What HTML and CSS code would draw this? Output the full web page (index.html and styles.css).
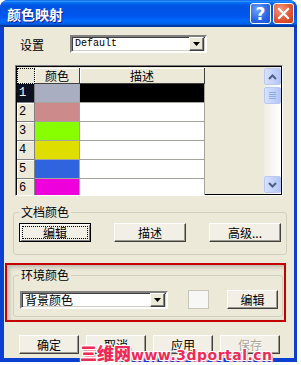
FILE: index.html
```html
<!DOCTYPE html>
<html lang="zh-CN">
<head>
  <meta charset="UTF-8" />
  <title>颜色映射</title>
  <link rel="stylesheet" href="styles.css">
</head>
<body>
  <div class="window">
    <div class="titlebar">
      <span class="title">颜色映射</span>
      <span class="tb-btn help">?</span>
      <span class="tb-btn close">
        <svg width="13" height="13" viewBox="0 0 13 13"><path d="M2 2 L11 11 M11 2 L2 11" stroke="#fff" stroke-width="2.2" stroke-linecap="square"/></svg>
      </span>
    </div>

    <div class="client">
      <div class="setting-row">
        <span class="lbl">设置</span>
        <div class="combo combo-default">
          <span class="combo-text mono">Default</span>
          <span class="combo-arrow"><svg width="7" height="4" viewBox="0 0 7 4"><path d="M0 0 H7 L3.5 4 Z" fill="#000"/></svg></span>
        </div>
      </div>

      <div class="list-frame">
        <div class="grid">
          <div class="hd corner"></div>
          <div class="hd">颜色</div>
          <div class="hd">描述</div>

          <div class="rn sel">1</div><div class="sw" style="background:#a9aec0"></div><div class="desc sel"></div>
          <div class="rn">2</div><div class="sw" style="background:#cc8a8a"></div><div class="desc"></div>
          <div class="rn">3</div><div class="sw" style="background:#88ff00"></div><div class="desc"></div>
          <div class="rn">4</div><div class="sw" style="background:#dede00"></div><div class="desc"></div>
          <div class="rn">5</div><div class="sw" style="background:#2f64de"></div><div class="desc"></div>
          <div class="rn">6</div><div class="sw" style="background:#ee00dd"></div><div class="desc"></div>
        </div>
        <div class="vscroll">
          <div class="sb-btn"><svg width="9" height="6" viewBox="0 0 9 6"><path d="M1 5 L4.5 1.5 L8 5" fill="none" stroke="#4d6185" stroke-width="2"/></svg></div>
          <div class="sb-thumb"><span></span><span></span><span></span><span></span></div>
          <div class="sb-track"></div>
          <div class="sb-btn"><svg width="9" height="6" viewBox="0 0 9 6"><path d="M1 1 L4.5 4.5 L8 1" fill="none" stroke="#4d6185" stroke-width="2"/></svg></div>
        </div>
      </div>

      <fieldset class="group doc">
        <legend>文档颜色</legend>
        <div class="btn-row">
          <button class="btn default"><span class="focus">编辑</span></button>
          <button class="btn">描述</button>
          <button class="btn">高级...</button>
        </div>
      </fieldset>

      <div class="annot">
        <fieldset class="group env">
          <legend>环境颜色</legend>
          <div class="env-row">
            <div class="combo combo-bg">
              <span class="combo-text">背景颜色</span>
              <span class="combo-arrow"><svg width="7" height="4" viewBox="0 0 7 4"><path d="M0 0 H7 L3.5 4 Z" fill="#000"/></svg></span>
            </div>
            <div class="swatch"></div>
            <button class="btn small">编辑</button>
          </div>
        </fieldset>
      </div>

      <div class="footer">
        <button class="btn">确定</button>
        <button class="btn">取消</button>
        <button class="btn">应用</button>
        <button class="btn disabled">保存</button>
      </div>

      <div class="watermark"><span class="wm-cn">三维网</span>www.3dportal.cn</div>
    </div>
  </div>
</body>
</html>
```

FILE: styles.css
```css
html, body {
  margin: 0;
  padding: 0;
  background: #fff;
  font-family: "Noto Sans CJK SC", "DejaVu Sans", sans-serif;
  font-size: 12px;
  color: #000;
}
.mono { font-family: "Liberation Mono", "DejaVu Sans Mono", monospace; }

.window {
  width: 297px;
  height: 362px;
  background: #0a3fd0;
  border-radius: 8px 8px 0 0;
  display: flex;
  flex-direction: column;
  overflow: hidden;
}
.titlebar {
  height: 27px;
  flex: none;
  display: flex;
  align-items: center;
  padding: 0 3px 0 7px;
  background: linear-gradient(to bottom, #0058ee 0%, #3593ff 4%, #288eff 6%, #127dff 8%, #036ffc 10%, #0262ee 14%, #0057e5 20%, #0054e3 24%, #0055eb 56%, #005bf5 66%, #026afe 76%, #0062ef 86%, #0052d6 92%, #0040ab 94%, #003092 100%);
}
.title {
  flex: 1;
  color: #fff;
  font-size: 14px;
  font-weight: bold;
  text-shadow: 1px 1px #0f1d8f;
}
.tb-btn {
  width: 19px;
  height: 19px;
  border: 1px solid #fff;
  border-radius: 3px;
  display: flex;
  align-items: center;
  justify-content: center;
  color: #fff;
  font: bold 17px "DejaVu Sans", sans-serif;
}
.help {
  margin-right: 2px;
  background: radial-gradient(circle at 35% 30%, #6fa0ff, #2a64e6 60%, #1d4fcf);
}
.close {
  background: radial-gradient(circle at 35% 30%, #f19a7e, #e0522f 60%, #c83c1c);
}

.client {
  flex: 1;
  margin: 0 3px 4px 4px;
  background: #ece9d8;
  padding-top: 8px;
  position: relative;
}

/* settings */
.setting-row {
  display: flex;
  align-items: center;
  margin-left: 16px;
  height: 18px;
}
.lbl { width: 50px; }
.combo {
  height: 14px;
  background: #fff;
  border: 2px solid;
  border-color: #808080 #fff #fff #808080;
  box-shadow: inset 1px 1px #404040, inset -1px -1px #d4d0c8;
  display: flex;
  align-items: center;
  padding: 0 1px 0 3px;
}
.combo-default { width: 129px; }
.combo-text { flex: 1; line-height: 14px; }
.combo-default .combo-text { font-size: 10px; }
.combo-arrow {
  width: 13px;
  height: 12px;
  background: #ece9d8;
  border: 1px solid;
  border-color: #fff #404040 #404040 #fff;
  box-shadow: inset -1px -1px #808080;
  display: flex;
  align-items: center;
  justify-content: center;
}

/* list */
.list-frame {
  margin: 12px 0 0 11px;
  width: 266px;
  height: 127px;
  padding-top: 2px;
  box-sizing: content-box;
  border: 1px solid #808080;
  border-right-color: #fff;
  border-bottom-color: #fff;
  box-shadow: inset 1px 1px #000, inset -1px -1px #000;
  display: flex;
  overflow: hidden;
}
.grid {
  flex: 1;
  margin-left: 1px;
  display: grid;
  grid-template-columns: 18px 45px 125px;
  grid-template-rows: 16px;
  grid-auto-rows: 19px;
  align-content: start;
  overflow: hidden;
}
.hd {
  background: #ece9d8;
  border-right: 1px solid #404040;
  border-bottom: 1px solid #404040;
  box-shadow: inset 1px 1px #fff;
  text-align: center;
  line-height: 15px;
}
.hd.corner {
  border: 1px dotted #000;
  box-shadow: none;
}
.rn {
  background: #ece9d8;
  border-right: 1px solid #808080;
  border-bottom: 1px solid #808080;
  box-shadow: inset 1px 1px #fff;
  font-family: "Liberation Mono", monospace;
  font-size: 12px;
  line-height: 18px;
  padding-left: 2px;
}
.rn.sel { background: #0c1222; color: #fff; box-shadow: none; }
.sw, .desc {
  border-right: 1px solid #a6a49a;
  border-bottom: 1px solid #a6a49a;
}
.desc { background: #fff; }
.desc.sel { background: #000; }

.vscroll {
  width: 17px;
  margin-right: 1px;
  margin-bottom: 1px;
  display: flex;
  flex-direction: column;
  background: linear-gradient(to right, #eeede5, #fff);
}
.sb-btn, .sb-thumb {
  height: 15px;
  margin: 0 0 1px;
  border: 1px solid #b9c9f3;
  border-radius: 2px;
  background: linear-gradient(to right, #d6e2fe, #c0d1fb 60%, #b1c6f8);
  display: flex;
  align-items: center;
  justify-content: center;
}
.sb-thumb {
  margin-top: 1px;
  flex-direction: column;
  gap: 1px;
}
.sb-thumb span {
  display: block;
  width: 7px;
  height: 1px;
  background: #8eaaf0;
}
.sb-track { flex: 1; }

/* group boxes */
.group {
  margin: 0;
  padding: 0;
  border: 1px solid #d0d0bf;
  border-radius: 3px;
  box-sizing: border-box;
}
.group legend {
  margin-left: 5px;
  padding: 0 2px;
  line-height: 14px;
}
.doc {
  margin: 9px 0 0 9px;
  width: 274px;
  height: 50px;
}
.btn-row {
  display: flex;
  gap: 23px;
  padding: 4px 0 0 5px;
}

.btn {
  font-family: "Noto Sans CJK SC", sans-serif;
  font-size: 12px;
  height: 19px;
  padding: 0;
  background: #f1efe6;
  border: 1px solid;
  border-color: #fff #404040 #404040 #fff;
  box-shadow: inset -1px -1px #9d9a8c;
  display: flex;
  align-items: center;
  justify-content: center;
  line-height: 14px;
}
.btn-row .btn { width: 72px; }
.btn.default {
  border: 1px solid #000;
  box-shadow: inset 1px 1px #fff, inset -1px -1px #808080;
}
.focus {
  width: 64px;
  height: 11px;
  border: 1px dotted #000;
  line-height: 11px;
}

/* annotation box */
.annot {
  margin: 8px 0 0 1px;
  width: 277px;
  height: 55px;
  border: 2px solid #c40000;
  box-shadow: inset 2px 2px 4px rgba(90, 90, 80, 0.35);
}
.env {
  margin: 3px 0 0 6px;
  width: 270px;
  height: 49px;
}
.env-row {
  display: flex;
  align-items: center;
  padding: 8px 0 0 6px;
}
.combo-bg { width: 140px; height: 14px; }
.swatch {
  width: 19px;
  height: 17px;
  margin-left: 20px;
  background: #f7f7f5;
  border: 1px solid #c8c6bb;
}
.btn.small { width: 51px; margin-left: 18px; }

/* footer */
.footer {
  display: flex;
  gap: 7px;
  margin: 13px 0 0 15px;
}
.footer .btn { width: 60px; }
.btn.disabled { color: #aca899; text-shadow: 1px 1px #fff; }

.watermark {
  position: absolute;
  left: 76px;
  top: 318px;
  color: #ee2a55;
  font: bold 14px "DejaVu Sans", sans-serif;
  line-height: 16px;
  letter-spacing: 0.5px;
  text-shadow: 1px 0 #fff, -1px 0 #fff, 0 1px #fff, 0 -1px #fff, 1px 1px #fff, -1px -1px #fff, 1px -1px #fff, -1px 1px #fff, 2px 2px #f8a0b0;
  white-space: nowrap;
}
.wm-cn {
  font-family: "Noto Sans CJK SC", sans-serif;
  font-size: 17px;
  font-weight: 900;
  letter-spacing: 0;
}
```
